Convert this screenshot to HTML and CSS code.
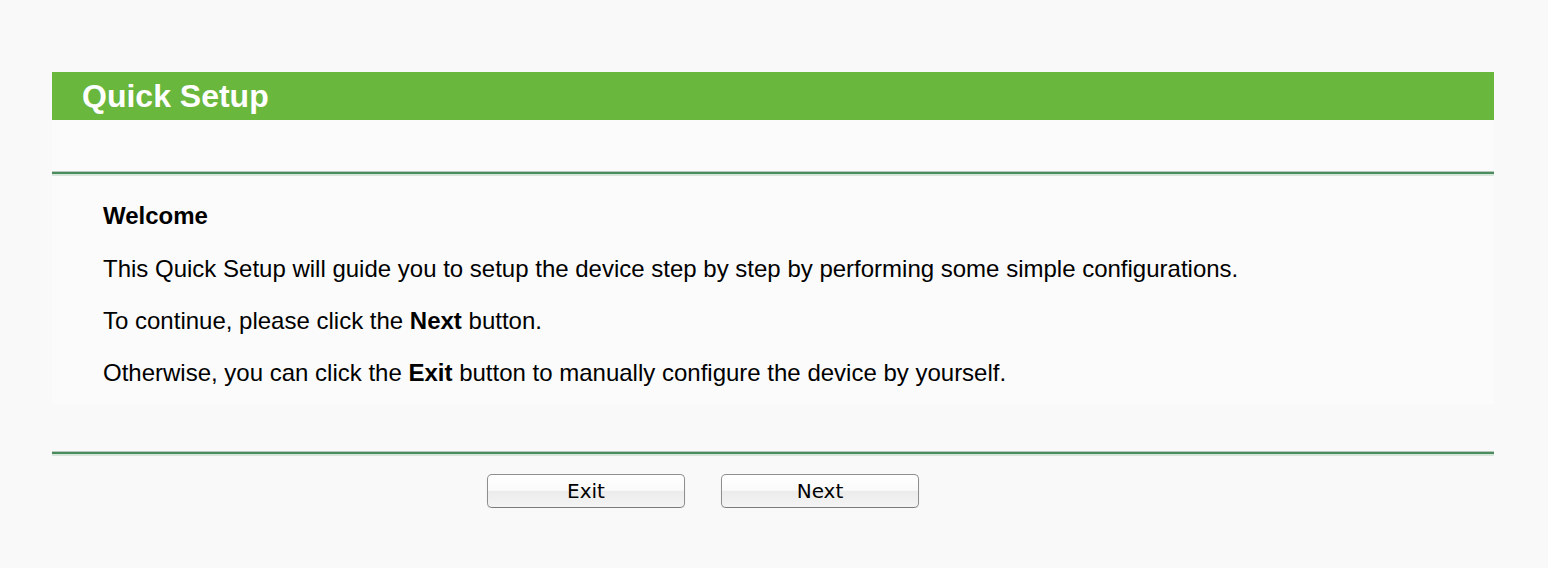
FILE: index.html
```html
<!DOCTYPE html>
<html>
<head>
<meta charset="utf-8">
<link rel="stylesheet" href="styles.css">
</head>
<body>
<div class="page">
  <div class="title-bar">Quick Setup</div>
  <div class="spacer-top"></div>
  <div class="rule"></div>
  <div class="content">
    <p class="welcome">Welcome</p>
    <p>This Quick Setup will guide you to setup the device step by step by performing some simple configurations.</p>
    <p>To continue, please click the <b>Next</b> button.</p>
    <p>Otherwise, you can click the <b>Exit</b> button to manually configure the device by yourself.</p>
  </div>
  <div class="spacer-bottom"></div>
  <div class="rule"></div>
  <div class="buttons">
    <button class="btn">Exit</button>
    <button class="btn">Next</button>
  </div>
</div>
</body>
</html>
```

FILE: styles.css
```css
html, body {
  margin: 0;
  padding: 0;
  background: #f9f9f9;
  font-family: "Liberation Sans", Arial, sans-serif;
  color: #000;
}
.page {
  margin: 72px 54px 0 52px;
}
.title-bar {
  height: 48px;
  background: #6ab73d;
  color: #fff;
  font-weight: bold;
  font-size: 32px;
  line-height: 48px;
  padding-left: 30px;
}
.spacer-top {
  height: 51px;
  background: #fbfbfb;
}
.rule {
  height: 2px;
  background: #4a8c5e;
  border-top: 1px solid #b7c9bd;
  border-bottom: 2px solid #d6e6da;
}
.content {
  background: #fbfbfb;
  padding: 26px 0 0 51px;
  height: 228px;
  box-sizing: border-box;
  font-size: 24px;
}
.content p {
  margin: 0 0 24px 0;
  line-height: 28px;
}
.content .welcome {
  font-weight: bold;
  margin-bottom: 25px;
}
.spacer-bottom {
  height: 47px;
}
.buttons {
  display: flex;
  justify-content: center;
  gap: 36px;
  padding-top: 18px;
  padding-right: 140px;
}
.btn {
  width: 198px;
  height: 34px;
  border: 1px solid #8e8e8e;
  border-bottom-color: #7a7a7a;
  border-radius: 5px;
  background: linear-gradient(#ffffff, #fafafa 48%, #ececec 50%, #f4f4f4);
  font-family: "DejaVu Sans", "Liberation Sans", sans-serif;
  font-size: 20px;
  color: #000;
  padding: 0 0 1px 0;
  box-shadow: 0 1px 1px rgba(0,0,0,0.12);
}
```
